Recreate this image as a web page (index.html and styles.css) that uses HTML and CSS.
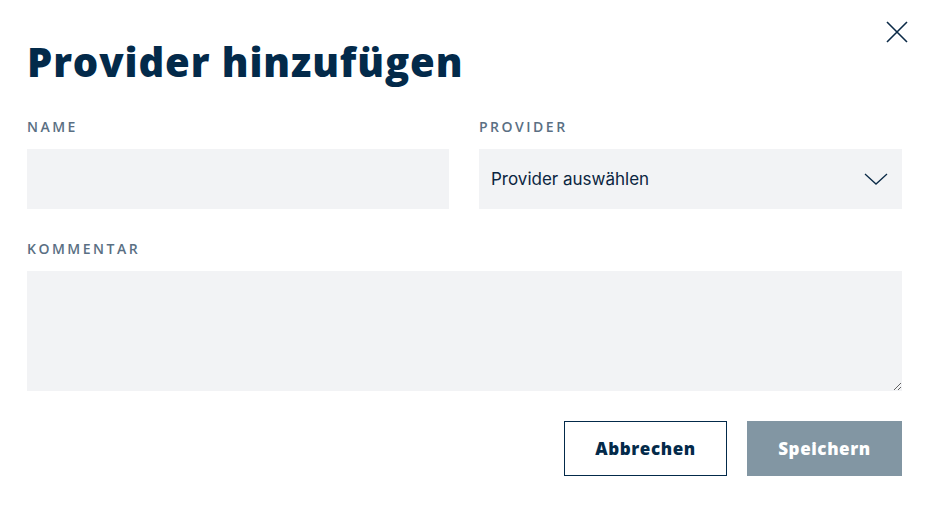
FILE: index.html
```html
<!DOCTYPE html>
<html lang="de">
<head>
<meta charset="utf-8">
<title>Provider hinzufügen</title>
<link rel="stylesheet" href="styles.css">
</head>
<body>
<div class="dialog">
  <button class="close" aria-label="Schließen">
    <svg width="22" height="22" viewBox="0 0 22 22"><path d="M1 1L21 21M21 1L1 21" stroke="#0b2a47" stroke-width="1.6" fill="none"/></svg>
  </button>
  <h1 class="title">Provider hinzufügen</h1>
  <div class="row">
    <div class="field">
      <label class="label">NAME</label>
      <input class="input" type="text">
    </div>
    <div class="field">
      <label class="label">PROVIDER</label>
      <div class="select">
        <span>Provider auswählen</span>
        <svg width="24" height="12" viewBox="0 0 24 12"><path d="M1 1L12 11L23 1" stroke="#0b2a47" stroke-width="1.3" fill="none"/></svg>
      </div>
    </div>
  </div>
  <div class="field field-comment">
    <label class="label">KOMMENTAR</label>
    <textarea class="textarea"></textarea>
  </div>
  <div class="actions">
    <button class="btn btn-outline">Abbrechen</button>
    <button class="btn btn-primary">Speichern</button>
  </div>
</div>
</body>
</html>
```
FILE: styles.css
```css
* { box-sizing: border-box; }
body {
  margin: 0;
  background: #fff;
  font-family: "Open Sans", "DejaVu Sans", sans-serif;
}
.dialog {
  position: relative;
  padding: 30px 29px 0 27px;
}
.close {
  position: absolute;
  top: 21px;
  right: 23px;
  width: 22px;
  height: 22px;
  padding: 0;
  border: 0;
  background: none;
  display: flex;
}
.title {
  margin: 0 0 24px;
  font-family: "Open Sans", sans-serif;
  font-weight: 800;
  font-size: 40px;
  line-height: 64px;
  color: #032a4a;
  letter-spacing: 0.9px;
}
.row {
  display: grid;
  grid-template-columns: 422fr 423fr;
  gap: 30px;
  margin-bottom: 31px;
}
.field {
  display: flex;
  flex-direction: column;
}
.field-comment {
  margin-bottom: 30px;
}
.label {
  font-family: "Open Sans", sans-serif;
  font-weight: 600;
  font-size: 14px;
  letter-spacing: 2.5px;
  color: #5a6f83;
  line-height: 18px;
  margin-bottom: 13px;
}
.input {
  height: 60px;
  border: 0;
  background: #f2f3f5;
}
.select {
  height: 60px;
  background: #f2f3f5;
  display: flex;
  align-items: center;
  justify-content: space-between;
  padding: 0 14px 0 12px;
  font-family: "Inter", "Roboto", sans-serif;
  font-size: 17px;
  color: #0b2540;
}
.textarea {
  display: block;
  height: 120px;
  border: 0;
  background: #f2f3f5;
  resize: vertical;
}
.actions {
  display: flex;
  justify-content: flex-end;
  gap: 20px;
}
.btn {
  height: 55px;
  font-family: "Open Sans", sans-serif;
  font-weight: 800;
  font-size: 17px;
  letter-spacing: 0.6px;
  cursor: pointer;
}
.btn-outline {
  width: 163px;
  background: #fff;
  border: 1px solid #032a4a;
  color: #032a4a;
}
.btn-primary {
  width: 155px;
  background: #8296a3;
  border: 0;
  color: #fff;
}
```
